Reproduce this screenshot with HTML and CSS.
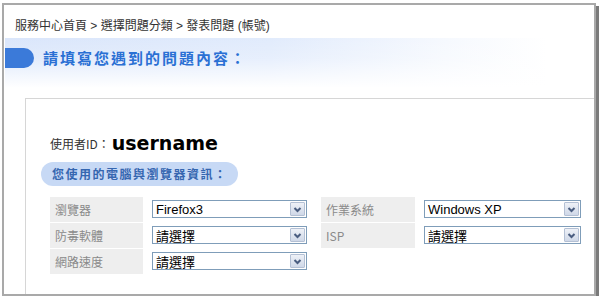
FILE: index.html
```html
<!DOCTYPE html>
<html>
<head>
    <meta charset="utf-8">
    <title>發表問題</title>
    <link rel="stylesheet" href="styles.css">
</head>
<body>
    <div class="frame">
        <div class="crumbs">服務中心首頁 &gt; 選擇問題分類 &gt; 發表問題 (帳號)</div>

        <div class="band">
            <span class="band-tab"></span>
            <h1>請填寫您遇到的問題內容：</h1>
        </div>

        <div class="panel">
            <div class="user">使用者ID：<strong>username</strong></div>
            <div class="section-pill">您使用的電腦與瀏覽器資訊：</div>

            <div class="info-grid">
                <div class="label">瀏覽器</div>
                <div class="field">
                    <div class="select"><span>Firefox3</span><i class="arrow"><svg width="13" height="13" viewBox="0 0 13 13"><polyline points="3.5,5 6.5,8 9.5,5" fill="none" stroke="#4a5d80" stroke-width="2"/></svg></i></div>
                </div>
                <div class="label">作業系統</div>
                <div class="field">
                    <div class="select"><span>Windows XP</span><i class="arrow"><svg width="13" height="13" viewBox="0 0 13 13"><polyline points="3.5,5 6.5,8 9.5,5" fill="none" stroke="#4a5d80" stroke-width="2"/></svg></i></div>
                </div>

                <div class="label">防毒軟體</div>
                <div class="field">
                    <div class="select"><span class="cjk">請選擇</span><i class="arrow"><svg width="13" height="13" viewBox="0 0 13 13"><polyline points="3.5,5 6.5,8 9.5,5" fill="none" stroke="#4a5d80" stroke-width="2"/></svg></i></div>
                </div>
                <div class="label">ISP</div>
                <div class="field">
                    <div class="select"><span class="cjk">請選擇</span><i class="arrow"><svg width="13" height="13" viewBox="0 0 13 13"><polyline points="3.5,5 6.5,8 9.5,5" fill="none" stroke="#4a5d80" stroke-width="2"/></svg></i></div>
                </div>

                <div class="label">網路速度</div>
                <div class="field">
                    <div class="select"><span class="cjk">請選擇</span><i class="arrow"><svg width="13" height="13" viewBox="0 0 13 13"><polyline points="3.5,5 6.5,8 9.5,5" fill="none" stroke="#4a5d80" stroke-width="2"/></svg></i></div>
                </div>
            </div>
        </div>
    </div>
</body>
</html>
```

FILE: styles.css
```css
:root {
    --frame-gray: #a9a9a9;
    --frame-shadow: #7a7a7a;
    --title-blue: #2a70d4;
    --tab-blue: #3b7ad9;
    --pill-bg: #c7d9f5;
    --pill-text: #3566b0;
    --cell-gray: #eeeeee;
}

body {
    margin: 0;
    background: #fff;
    font-family: "Liberation Sans", "Noto Sans CJK TC", sans-serif;
    font-size: 12px;
    color: #333;
}

.frame {
    box-sizing: border-box;
    width: 594px;
    height: 293px;
    margin: 3px 0 0 2px;
    border: 2px solid var(--frame-gray);
    box-shadow: 3px 3px 0 var(--frame-shadow);
    display: flex;
    flex-direction: column;
    overflow: hidden;
}

.crumbs {
    box-sizing: border-box;
    height: 33px;
    padding: 5px 0 0 11px;
    display: flex;
    align-items: center;
    color: #333;
}

.band {
    height: 50px;
    margin-left: 1px;
    padding-top: 10px;
    box-sizing: border-box;
    display: flex;
    align-items: flex-start;
    background:
        linear-gradient(to bottom, rgba(255,255,255,0) 0%, rgba(255,255,255,0.2) 40%, #fff 100%),
        linear-gradient(to right, #dae6fb 0%, #e1ebfc 45%, #f6f9fe 75%, #fff 92%);
}

.band-tab {
    width: 29px;
    height: 20px;
    background: var(--tab-blue);
    border-radius: 0 10px 10px 0;
    margin-right: 9px;
}

.band h1 {
    margin: 0;
    font-family: "Noto Sans CJK TC", sans-serif;
    font-size: 15px;
    line-height: 20px;
    font-weight: bold;
    letter-spacing: 2px;
    color: var(--title-blue);
}

.panel {
    flex: 1;
    margin: 10px 0 0 21px;
    padding: 32px 0 0 15px;
    border-top: 1px solid #d6d6d6;
    border-left: 1px solid #d6d6d6;
}

.user {
    height: 24px;
    margin-left: 9px;
    display: flex;
    align-items: center;
    font-family: "Noto Sans CJK TC", sans-serif;
    color: #333;
}

.user strong {
    font-family: "DejaVu Sans", sans-serif;
    font-size: 19px;
    color: #000;
    margin-left: 2px;
}

.section-pill {
    display: inline-block;
    height: 24px;
    line-height: 24px;
    margin-top: 7px;
    padding: 0 10px 0 11px;
    border-radius: 12px;
    background: var(--pill-bg);
    color: var(--pill-text);
    font-family: "Noto Sans CJK TC", sans-serif;
    font-weight: bold;
    letter-spacing: 1.5px;
}

.info-grid {
    display: grid;
    grid-template-columns: 93px 178px 94px 166px;
    grid-auto-rows: 25px;
    row-gap: 1px;
    margin: 11px 0 0 9px;
}

.label {
    background: var(--cell-gray);
    padding-left: 5px;
    line-height: 25px;
    color: #8a8a8a;
    font-family: "Noto Sans CJK TC", sans-serif;
}

.field {
    padding: 3px 0 0 9px;
}

.field:nth-child(4n+2) {
    padding-right: 14px;
}

.select {
    box-sizing: border-box;
    height: 18px;
    border: 1px solid #7f9db9;
    background: #fff;
    display: flex;
    align-items: center;
    justify-content: space-between;
    color: #000;
    font-size: 13px;
}

.select span {
    padding-left: 3px;
}

.select .cjk {
    font-family: "Noto Sans CJK TC", sans-serif;
    font-size: 13px;
}

.arrow {
    box-sizing: border-box;
    width: 15px;
    height: 14px;
    margin-right: 1px;
    border: 1px solid #b4c0d4;
    border-radius: 1px;
    background: linear-gradient(to bottom, #eef1f7, #cfd8e8);
    display: flex;
    align-items: center;
    justify-content: center;
}
```
